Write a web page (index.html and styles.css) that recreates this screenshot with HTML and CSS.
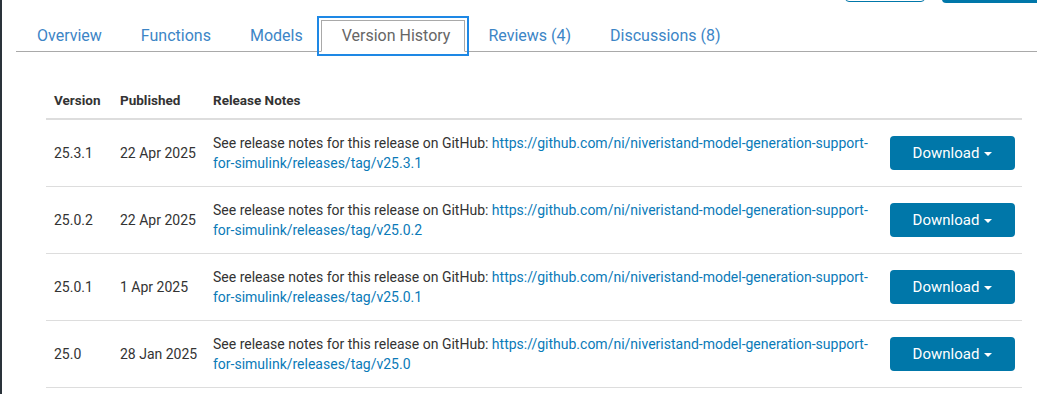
FILE: index.html
```html
<!DOCTYPE html>
<html lang="en">
<head>
<meta charset="utf-8">
<title>Version History</title>
<link rel="stylesheet" href="styles.css">
</head>
<body>
<div class="page">
  <div class="actions">
    <span class="btn-outline"></span>
    <span class="btn-fill"></span>
  </div>
  <ul class="tabs">
    <li><a href="#">Overview</a></li>
    <li><a href="#">Functions</a></li>
    <li><a href="#">Models</a></li>
    <li class="active"><a href="#">Version History</a></li>
    <li><a href="#">Reviews (4)</a></li>
    <li><a href="#">Discussions (8)</a></li>
  </ul>
  <div class="content">
    <table class="versions">
      <colgroup>
        <col class="c-ver"><col class="c-pub"><col class="c-notes"><col class="c-dl">
      </colgroup>
      <thead>
        <tr><th>Version</th><th>Published</th><th>Release Notes</th><th></th></tr>
      </thead>
      <tbody>
        <tr>
          <td>25.3.1</td><td class="date">22 Apr 2025</td>
          <td>See release notes for this release on GitHub: <a href="#">https://github.com/ni/niveristand-model-generation-support-for-simulink/releases/tag/v25.3.1</a></td>
          <td><button class="dl">Download <span class="caret"></span></button></td>
        </tr>
        <tr>
          <td>25.0.2</td><td class="date">22 Apr 2025</td>
          <td>See release notes for this release on GitHub: <a href="#">https://github.com/ni/niveristand-model-generation-support-for-simulink/releases/tag/v25.0.2</a></td>
          <td><button class="dl">Download <span class="caret"></span></button></td>
        </tr>
        <tr>
          <td>25.0.1</td><td class="date">1 Apr 2025</td>
          <td>See release notes for this release on GitHub: <a href="#">https://github.com/ni/niveristand-model-generation-support-for-simulink/releases/tag/v25.0.1</a></td>
          <td><button class="dl">Download <span class="caret"></span></button></td>
        </tr>
        <tr>
          <td>25.0</td><td class="date">28 Jan 2025</td>
          <td>See release notes for this release on GitHub: <a href="#">https://github.com/ni/niveristand-model-generation-support-for-simulink/releases/tag/v25.0</a></td>
          <td><button class="dl">Download <span class="caret"></span></button></td>
        </tr>
      </tbody>
    </table>
  </div>
</div>
</body>
</html>
```

FILE: styles.css
```css
html, body {
  margin: 0;
  padding: 0;
  background: #fff;
}
body {
  border-left: 2px solid #2a323a;
  min-height: 394px;
  box-sizing: border-box;
  font-family: Roboto, "Liberation Sans", sans-serif;
  color: #333;
  overflow: hidden;
}
.page {
  padding-left: 14px;
}
.actions {
  display: flex;
  justify-content: flex-end;
  gap: 17px;
  margin-top: -40px;
  height: 42px;
  margin-right: -40px;
}
.btn-outline, .btn-fill {
  display: block;
  box-sizing: border-box;
  height: 42px;
  border-radius: 4px;
}
.btn-outline {
  width: 80px;
  border: 1px solid #0077a9;
}
.btn-fill {
  width: 135px;
  height: 42px;
  background: #0077a9;
  margin-top: 1px;
}
.tabs {
  list-style: none;
  margin: 18px 0 0;
  padding: 0;
  display: flex;
  border-bottom: 1px solid #a9a9a9;
}
.tabs li {
  margin-bottom: -1px;
}
.tabs a {
  display: block;
  padding: 5px 17px 5px 20px;
  line-height: 20px;
  font-size: 16px;
  color: #3c85c6;
  text-decoration: none;
  border: 1px solid transparent;
}
.tabs .active a {
  color: #666;
  padding-right: 14px;
  border-color: #a9a9a9;
  border-bottom-color: #fff;
  outline: 2px solid #1e88e5;
  outline-offset: 2px;
}
.tabs .active + li a {
  padding-left: 22px;
}
.content {
  padding: 26px 15px 0 30px;
}
.versions {
  width: 100%;
  border-collapse: collapse;
  table-layout: fixed;
  font-size: 14px;
  line-height: 20px;
}
.c-ver { width: 66px; }
.c-pub { width: 93px; }
.c-dl { width: 140px; }
.versions th {
  text-align: left;
  font-weight: bold;
  font-size: 13.5px;
  padding: 12px 8px 8px;
  border-bottom: 2px solid #ddd;
  color: #333;
}
.versions td {
  padding: 13px 8px;
  border-bottom: 1px solid #ddd;
  vertical-align: middle;
  color: #333;
}
.versions td.date {
  white-space: nowrap;
}
.versions td a {
  color: #0a7ab8;
  text-decoration: none;
}
.dl {
  display: inline-flex;
  align-items: center;
  justify-content: center;
  gap: 5px;
  width: 125px;
  height: 34px;
  border: none;
  border-radius: 4px;
  background: #0077a9;
  color: #fff;
  font-family: Roboto, "Liberation Sans", sans-serif;
  font-size: 15px;
  padding: 0;
  cursor: pointer;
}
.caret {
  display: inline-block;
  width: 0;
  height: 0;
  border-left: 4px solid transparent;
  border-right: 4px solid transparent;
  border-top: 4px solid #fff;
  margin-top: 2px;
}
```
